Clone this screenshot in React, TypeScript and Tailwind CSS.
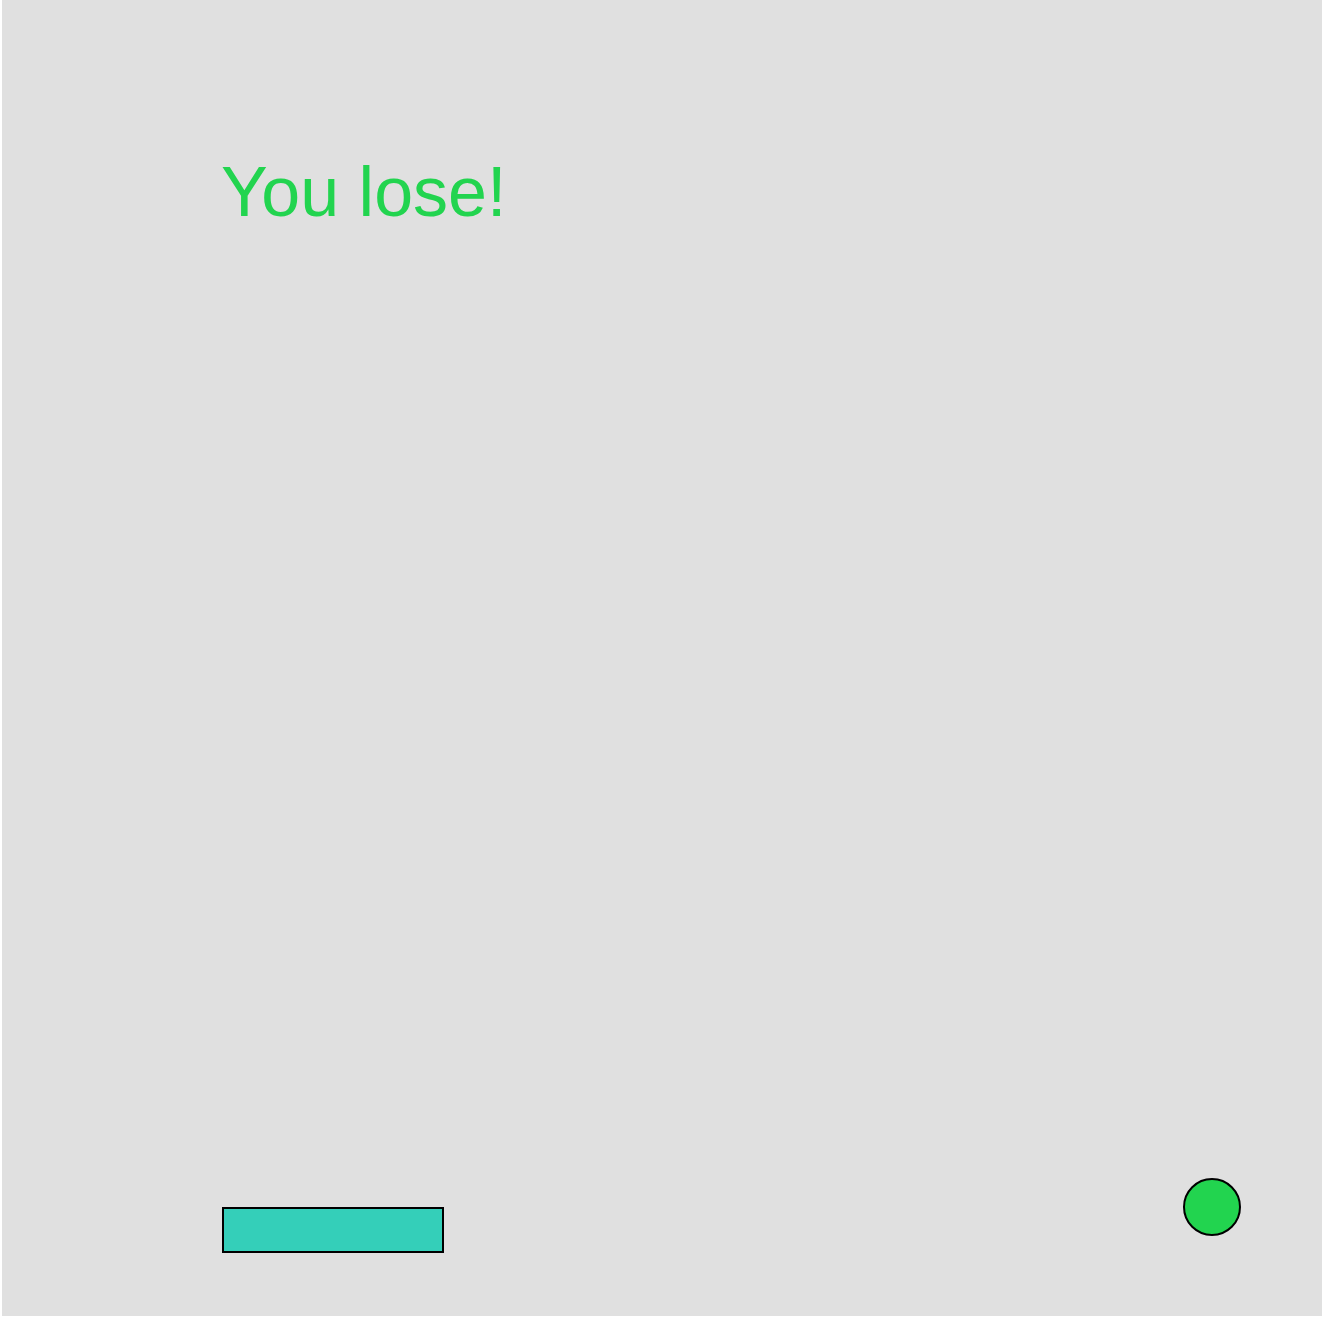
export default function App() {
  return (
    <div className="min-h-[1317px] w-[1328px] bg-white pl-[2px]">
      <div className="relative h-[1316px] w-[1320px] bg-[#e0e0e0] font-['Liberation_Sans',Arial,sans-serif]">
        <div className="absolute left-[219px] top-[152px] text-[70px] leading-[normal] text-[#22d44f]">
          You lose!
        </div>
        <div className="absolute left-[220px] top-[1207px] h-[46px] w-[222px] border-2 border-black bg-[#34cfb9]" />
        <div className="absolute left-[1181px] top-[1178px] h-[58px] w-[58px] rounded-full border-2 border-black bg-[#22d44f]" />
      </div>
    </div>
  );
}
